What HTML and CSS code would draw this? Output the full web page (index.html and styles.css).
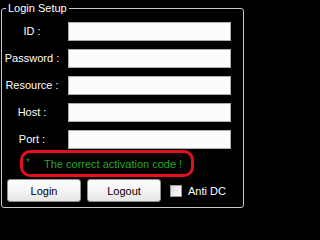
FILE: index.html
```html
<!DOCTYPE html>
<html>
<head>
<meta charset="utf-8">
<link rel="stylesheet" href="styles.css">
</head>
<body>
<fieldset class="setup">
  <legend class="setup-title">Login Setup</legend>
  <div class="fields">
    <label class="field-label" for="f-id">ID :</label>
    <input class="field-input" id="f-id" type="text">
    <label class="field-label" for="f-pw">Password :</label>
    <input class="field-input" id="f-pw" type="password">
    <label class="field-label" for="f-res">Resource :</label>
    <input class="field-input" id="f-res" type="text">
    <label class="field-label" for="f-host">Host :</label>
    <input class="field-input" id="f-host" type="text">
    <label class="field-label" for="f-port">Port :</label>
    <input class="field-input" id="f-port" type="text">
  </div>
  <div class="status">
    <span class="status-star">*</span>
    <span class="status-text">The correct activation code !</span>
  </div>
  <div class="actions">
    <button class="btn" type="button">Login</button>
    <button class="btn" type="button">Logout</button>
    <label class="check"><input class="check-box" type="checkbox"><span>Anti DC</span></label>
  </div>
</fieldset>
</body>
</html>
```
FILE: styles.css
```css
html, body {
  margin: 0;
  background: #000;
}
body {
  width: 248px;
  height: 212px;
  overflow: hidden;
  font-family: "Liberation Sans", Arial, sans-serif;
  font-size: 11px;
  color: #fff;
}
.setup {
  box-sizing: border-box;
  width: 243px;
  height: 208px;
  min-width: 0;
  margin: 0 0 0 1px;
  padding: 0 11px 0 0;
  border: 1px solid #c8c8c8;
  border-radius: 3px;
}
.setup-title {
  margin-left: 4px;
  padding: 0 2px;
  line-height: 17px;
  color: #fff;
}
.fields {
  display: grid;
  grid-template-columns: 60px 163px;
  column-gap: 6px;
  row-gap: 8px;
  margin-top: 5px;
}
.field-label {
  text-align: center;
  line-height: 19px;
  color: #fff;
}
.field-input {
  box-sizing: border-box;
  width: 163px;
  height: 19px;
  margin: 0;
  padding: 0 2px;
  border: 1px solid #a9acb2;
  background: #fcfcfc;
  font: inherit;
  color: #000;
}
.status {
  box-sizing: border-box;
  width: 174px;
  height: 27px;
  margin: 1px 0 0 18px;
  padding-left: 3px;
  border: 3px solid #e3101e;
  border-radius: 10px;
  display: flex;
  align-items: center;
  color: #29a629;
}
.status-star {
  width: 18px;
  font-size: 10px;
  color: #1f8a1f;
  margin-top: -2px;
}
.status-text {
  white-space: nowrap;
}
.actions {
  display: flex;
  align-items: center;
  margin: 2px 0 0 5px;
}
.btn {
  box-sizing: border-box;
  width: 74px;
  height: 23px;
  margin: 0;
  padding: 0;
  font: inherit;
  color: #000;
  border: 1px solid #8e8f8f;
  border-radius: 3px;
  background: linear-gradient(#ffffff, #f4f4f4 50%, #e6e6e6);
}
.btn + .btn {
  margin-left: 6px;
}
.check {
  display: flex;
  align-items: center;
  gap: 6px;
  margin-left: 9px;
  color: #fff;
}
.check-box {
  appearance: none;
  -webkit-appearance: none;
  box-sizing: border-box;
  width: 12px;
  height: 12px;
  margin: 0;
  border: 1px solid #9a9a9a;
  background: linear-gradient(135deg, #dcdcdc, #ffffff);
}
```
